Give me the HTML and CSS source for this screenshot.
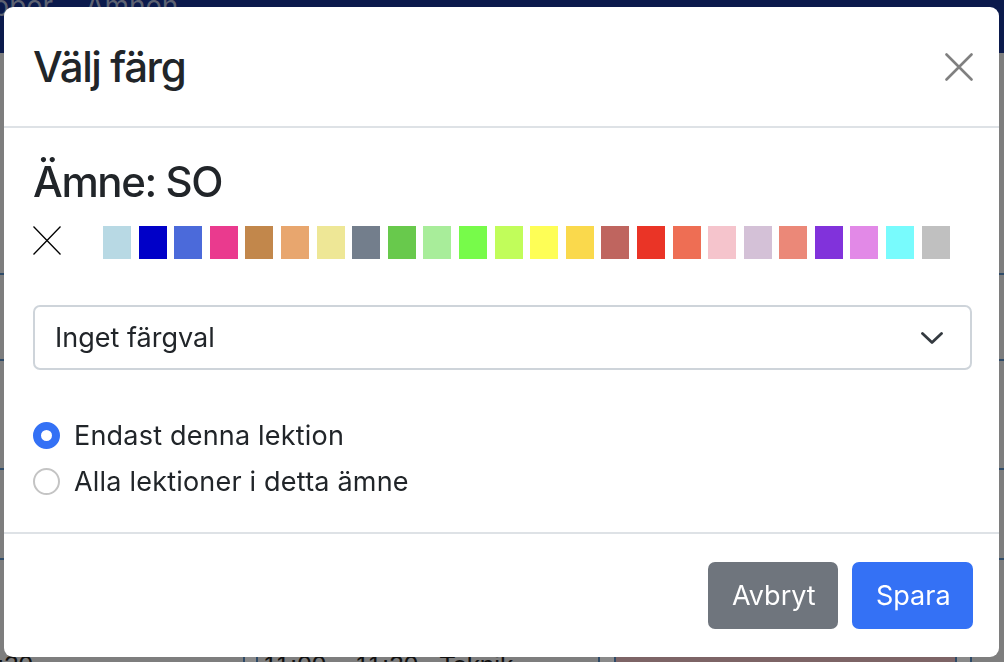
FILE: index.html
```html
<!DOCTYPE html>
<html lang="sv">
<head>
<meta charset="utf-8">
<title>Välj färg</title>
<link rel="stylesheet" href="styles.css">
</head>
<body>
<div class="page">
  <div class="navbar">
    <span class="nav-item">Grupper</span>
    <span class="nav-item">Ämnen</span>
  </div>
  <div class="schedule">
    <div class="row r1"></div>
    <div class="row r2"></div>
    <div class="row r3"></div>
    <div class="row r4"></div>
    <div class="row r5"></div>
    <div class="row last">
      <div class="cell c1">10:30</div>
      <div class="cell c2"></div>
      <div class="cell c3">11:00 – 11:20 &nbsp; Teknik</div>
      <div class="cell c4"></div>
      <div class="cell c5"></div>
      <div class="cell c6"></div>
    </div>
  </div>
</div>

<div class="modal">
  <div class="modal-header">
    <h4 class="modal-title">Välj färg</h4>
    <button class="btn-close" type="button" aria-label="Stäng">
      <svg width="28" height="28" viewBox="0 0 28 28"><path d="M1.5 1.5 L26.5 26.5 M26.5 1.5 L1.5 26.5" stroke="#808080" stroke-width="2.6" stroke-linecap="round" fill="none"/></svg>
    </button>
  </div>
  <div class="modal-body">
    <h4 class="subject">Ämne: SO</h4>
    <div class="swatches">
      <span class="no-color">
        <svg width="28" height="29" viewBox="0 0 28 29"><path d="M0.5 0.5 L27.5 28.5 M27.5 0.5 L0.5 28.5" stroke="#000" stroke-width="1.3" fill="none"/></svg>
      </span>
      <span class="sw" style="background:#b8d9e4"></span>
      <span class="sw" style="background:#0000c8"></span>
      <span class="sw" style="background:#4b6ada"></span>
      <span class="sw" style="background:#ea3a8e"></span>
      <span class="sw" style="background:#c2874b"></span>
      <span class="sw" style="background:#e8a66e"></span>
      <span class="sw" style="background:#eee796"></span>
      <span class="sw" style="background:#737e8c"></span>
      <span class="sw" style="background:#68c94c"></span>
      <span class="sw" style="background:#a8ed9a"></span>
      <span class="sw" style="background:#77fb4a"></span>
      <span class="sw" style="background:#c1fd5a"></span>
      <span class="sw" style="background:#fefe56"></span>
      <span class="sw" style="background:#fad94c"></span>
      <span class="sw" style="background:#bf655f"></span>
      <span class="sw" style="background:#ea3426"></span>
      <span class="sw" style="background:#ee6e54"></span>
      <span class="sw" style="background:#f5c4cc"></span>
      <span class="sw" style="background:#d4c1d7"></span>
      <span class="sw" style="background:#eb8878"></span>
      <span class="sw" style="background:#8132db"></span>
      <span class="sw" style="background:#e289e7"></span>
      <span class="sw" style="background:#78fbfd"></span>
      <span class="sw" style="background:#c0c0c0"></span>
    </div>
    <div class="select">
      <span class="select-text">Inget färgval</span>
      <svg class="chevron" width="22" height="12" viewBox="0 0 22 12"><path d="M1.5 1.5 L11 10.5 L20.5 1.5" stroke="#343a40" stroke-width="2.8" stroke-linecap="round" stroke-linejoin="round" fill="none"/></svg>
    </div>
    <div class="radios">
      <label class="radio">
        <span class="radio-dot checked"></span>
        <span class="radio-label">Endast denna lektion</span>
      </label>
      <label class="radio">
        <span class="radio-dot"></span>
        <span class="radio-label">Alla lektioner i detta ämne</span>
      </label>
    </div>
  </div>
  <div class="modal-footer">
    <button class="btn btn-secondary" type="button">Avbryt</button>
    <button class="btn btn-primary" type="button">Spara</button>
  </div>
</div>
</body>
</html>
```
FILE: styles.css
```css
* { box-sizing: border-box; }
html, body { margin: 0; padding: 0; }
body {
  width: 1004px;
  height: 662px;
  overflow: hidden;
  background: #7e7e7e;
  font-family: Inter, "Liberation Sans", sans-serif;
  color: #212529;
}
.page { width: 1004px; height: 662px; overflow: hidden; }
.navbar {
  height: 53px;
  background: #0b1a4c;
  display: flex;
  gap: 32px;
  padding-left: 0;
  margin-left: -56px;
}
.nav-item {
  font-size: 28px;
  color: #5d6272;
  line-height: 1;
  margin-top: -8px;
}
.schedule { display: flex; flex-direction: column; }
.row { border-bottom: 2px solid #2f4b68; }
.r1 { height: 222px; }
.r2 { height: 86px; }
.r3 { height: 109px; }
.r4 { height: 90px; }
.r5 { height: 88px; border-bottom: none; }
.last { display: flex; height: 20px; border: none; font-family: "Liberation Sans", sans-serif; font-size: 26px; color: #111; }
.cell { padding-top: 2px; line-height: 30px; white-space: nowrap; overflow: hidden; }
.c1 { width: 275px; margin-left: -32px; }
.c2 { width: 15px; border-left: 2px solid #2f4b68; border-right: 2px solid #2f4b68; background: #8a8a8a; }
.c3 { width: 340px; padding-left: 5px; }
.c4 { width: 18px; border-left: 2px solid #2f4b68; border-right: 2px solid #2f4b68; background: #8a8a8a; }
.c5 { width: 339px; background: #7d6466; }
.c6 { width: 17px; border-left: 2px solid #2f4b68; border-right: 2px solid #2f4b68; background: #8a8a8a; }

.modal {
  position: fixed;
  left: 4px;
  top: 7px;
  width: 995px;
  height: 650px;
  background: #fff;
  border-radius: 9px;
  display: flex;
  flex-direction: column;
}
.modal-header {
  height: 121px;
  padding: 0 26px 0 29px;
  display: flex;
  align-items: center;
  justify-content: space-between;
  border-bottom: 2px solid #dee2e6;
}
.modal-title, .subject {
  margin: 0;
  font-size: 42px;
  font-weight: 500;
  line-height: 52px;
  letter-spacing: -1.4px;
}
.btn-close {
  border: 0;
  background: none;
  padding: 0;
  width: 28px;
  height: 28px;
  display: flex;
}
.modal-body {
  padding: 28px 27px 0 29px;
  height: 406px;
  border-bottom: 2px solid #dee2e6;
}
.subject { margin-bottom: 18px; }
.swatches {
  display: flex;
  align-items: flex-start;
  height: 33px;
}
.no-color { width: 28px; height: 29px; display: flex; margin-right: 42px; }
.sw {
  width: 28px;
  height: 33px;
  margin-right: 7.6px;
  flex: none;
}
.select {
  margin-top: 46px;
  height: 65px;
  border: 2px solid #ced4da;
  border-radius: 7px;
  display: flex;
  align-items: center;
  justify-content: space-between;
  padding: 0 27px 0 20px;
  font-size: 27px;
}
.chevron { display: block; }
.radios {
  margin-top: 45px;
  display: flex;
  flex-direction: column;
  gap: 6px;
}
.radio {
  display: flex;
  align-items: center;
  gap: 14px;
  font-size: 27px;
  letter-spacing: 0.2px;
  height: 40px;
}
.radio-dot {
  width: 27px;
  height: 27px;
  border-radius: 50%;
  border: 2px solid #c4c4c4;
  flex: none;
  background: #fff;
}
.radio-dot.checked {
  border: 8.5px solid #3471f5;
  background: #fff;
}
.modal-footer {
  flex: 1;
  display: flex;
  align-items: center;
  justify-content: flex-end;
  gap: 14px;
  padding: 0 26px 0 29px;
}
.btn {
  height: 67px;
  border: 0;
  border-radius: 7px;
  color: #fff;
  font-family: Inter, "Liberation Sans", sans-serif;
  font-size: 27px;
  padding: 0 24px;
}
.btn-secondary { background: #6f757d; width: 130px; }
.btn-primary { background: #3471f5; width: 121px; }
```
